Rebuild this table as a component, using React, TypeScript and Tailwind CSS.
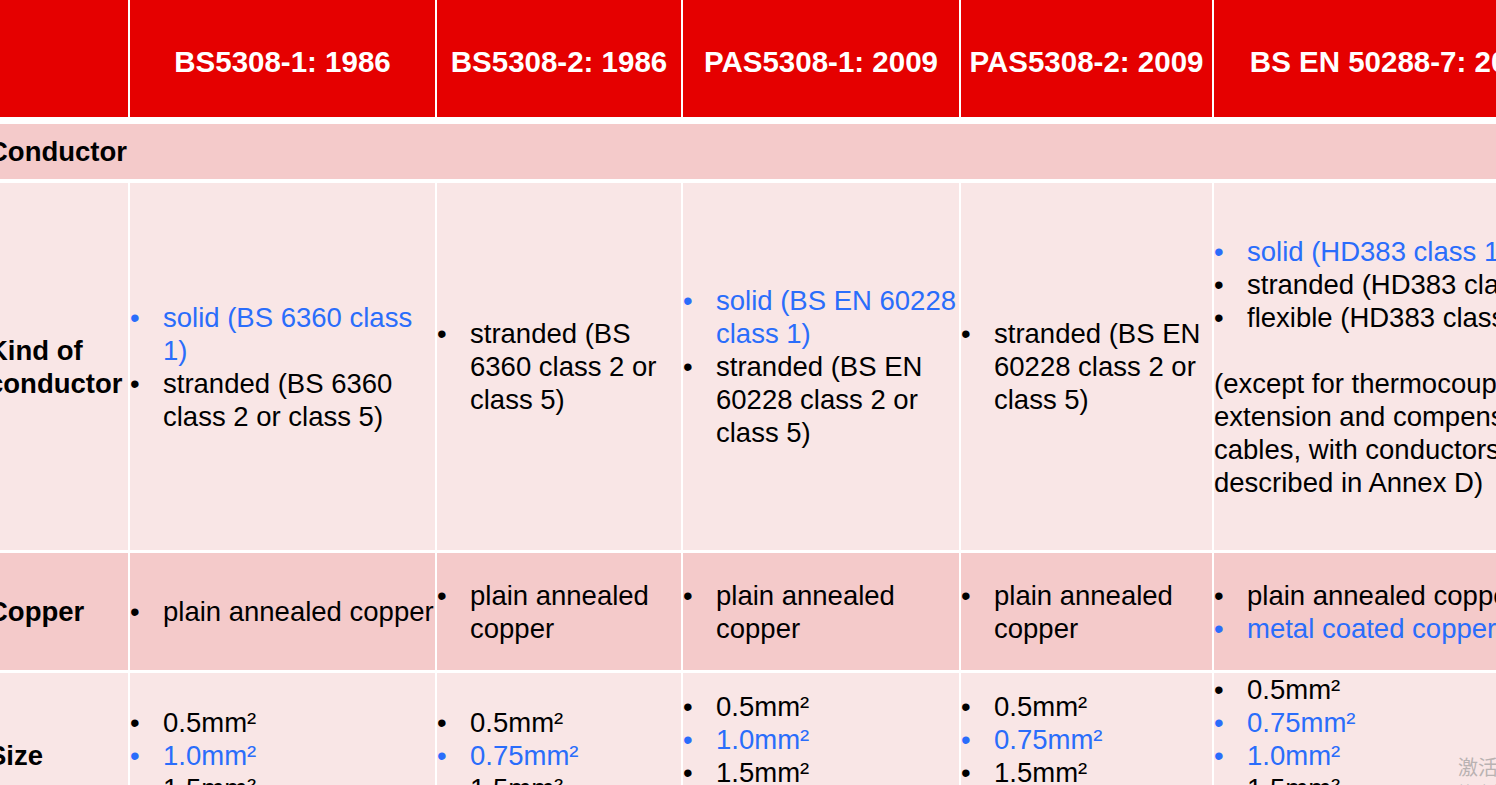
import React from "react";

type Item = { t: string; blue?: boolean };

const grid = "grid grid-cols-[148px_305px_244px_276px_251px_362px] gap-x-[2px]";

const headers = [
  "BS5308-1: 1986",
  "BS5308-2: 1986",
  "PAS5308-1: 2009",
  "PAS5308-2: 2009",
  "BS EN 50288-7: 2005",
];

const kind: Item[][] = [
  [{ t: "solid (BS 6360 class 1)", blue: true }, { t: "stranded (BS 6360 class 2 or class 5)" }],
  [{ t: "stranded (BS 6360 class 2 or class 5)" }],
  [{ t: "solid (BS EN 60228 class 1)", blue: true }, { t: "stranded (BS EN 60228 class 2 or class 5)" }],
  [{ t: "stranded (BS EN 60228 class 2 or class 5)" }],
];

const copper: Item[][] = [
  [{ t: "plain annealed copper" }],
  [{ t: "plain annealed copper" }],
  [{ t: "plain annealed copper" }],
  [{ t: "plain annealed copper" }],
  [{ t: "plain annealed copper" }, { t: "metal coated copper", blue: true }],
];

const sizes: Item[][] = [
  [{ t: "0.5mm²" }, { t: "1.0mm²", blue: true }, { t: "1.5mm²" }],
  [{ t: "0.5mm²" }, { t: "0.75mm²", blue: true }, { t: "1.5mm²" }],
  [{ t: "0.5mm²" }, { t: "1.0mm²", blue: true }, { t: "1.5mm²" }, { t: "2.5mm²" }],
  [{ t: "0.5mm²" }, { t: "0.75mm²", blue: true }, { t: "1.5mm²" }, { t: "2.5mm²" }],
  [
    { t: "0.5mm²" },
    { t: "0.75mm²", blue: true },
    { t: "1.0mm²", blue: true },
    { t: "1.5mm²" },
    { t: "2.5mm²" },
  ],
];

function Bullets({ items }: { items: Item[] }) {
  return (
    <ul>
      {items.map((it, i) => (
        <li key={i} className={`flex ${it.blue ? "text-[#2a6dfb]" : "text-black"}`}>
          <span className="w-[33px] shrink-0">•</span>
          <span>{it.t}</span>
        </li>
      ))}
    </ul>
  );
}

export default function App() {
  return (
    <div
      className="relative h-[785px] w-[1496px] overflow-hidden bg-white text-[27.5px] leading-[33px]"
      style={{ fontFamily: '"Liberation Sans", Arial, sans-serif' }}
    >
      <div className="ml-[-20px] w-max">
        {/* header */}
        <div className={`${grid} h-[117px]`}>
          <div className="bg-[#e50000]" />
          {headers.map((h) => (
            <div
              key={h}
              className="flex items-center justify-center whitespace-nowrap bg-[#e50000] pt-[6px] text-[29.5px] font-bold text-white"
            >
              {h}
            </div>
          ))}
        </div>

        {/* Conductor */}
        <div className="mt-[7px] flex h-[55px] items-center bg-[#f4caca] pl-[8px] font-bold text-black">
          Conductor
        </div>

        {/* Kind of conductor */}
        <div className={`${grid} mt-[3px] h-[368px] pt-[1px]`}>
          <div className="flex items-center bg-[#f9e6e6] pl-[8px] font-bold text-black">
            Kind of
            <br />
            conductor
          </div>
          {kind.map((items, i) => (
            <div key={i} className="flex items-center bg-[#f9e6e6]">
              <Bullets items={items} />
            </div>
          ))}
          <div className="flex items-center bg-[#f9e6e6]">
            <div>
              <Bullets
                items={[
                  { t: "solid (HD383 class 1)", blue: true },
                  { t: "stranded (HD383 class 2)" },
                  { t: "flexible (HD383 class 5)" },
                ]}
              />
              <p className="mt-[33px] text-black">
                (except for thermocouple extension and compensating cables, with conductors as
                described in Annex D)
              </p>
            </div>
          </div>
        </div>

        {/* Copper */}
        <div className={`${grid} mt-[3px] h-[117px]`}>
          <div className="flex items-center bg-[#f4caca] pl-[8px] font-bold text-black">Copper</div>
          {copper.map((items, i) => (
            <div key={i} className="flex items-center bg-[#f4caca]">
              <Bullets items={items} />
            </div>
          ))}
        </div>

        {/* Size */}
        <div className={`${grid} mt-[3px] h-[165px]`}>
          <div className="flex items-center bg-[#f9e6e6] pl-[8px] font-bold text-black">Size</div>
          {sizes.map((items, i) => (
            <div key={i} className="flex items-center bg-[#f9e6e6]">
              <Bullets items={items} />
            </div>
          ))}
        </div>
      </div>

      {/* activation watermark */}
      <div
        className="absolute left-[1458px] top-[753px] whitespace-nowrap text-[#b9b2b2]"
        style={{ fontFamily: '"Noto Sans CJK SC", "Liberation Sans", sans-serif' }}
      >
        <div className="text-[20px] leading-[28px]">激活 Windows</div>
        <div className="text-[14px] leading-[18px]">转到“设置”以激活 Windows。</div>
      </div>
    </div>
  );
}
